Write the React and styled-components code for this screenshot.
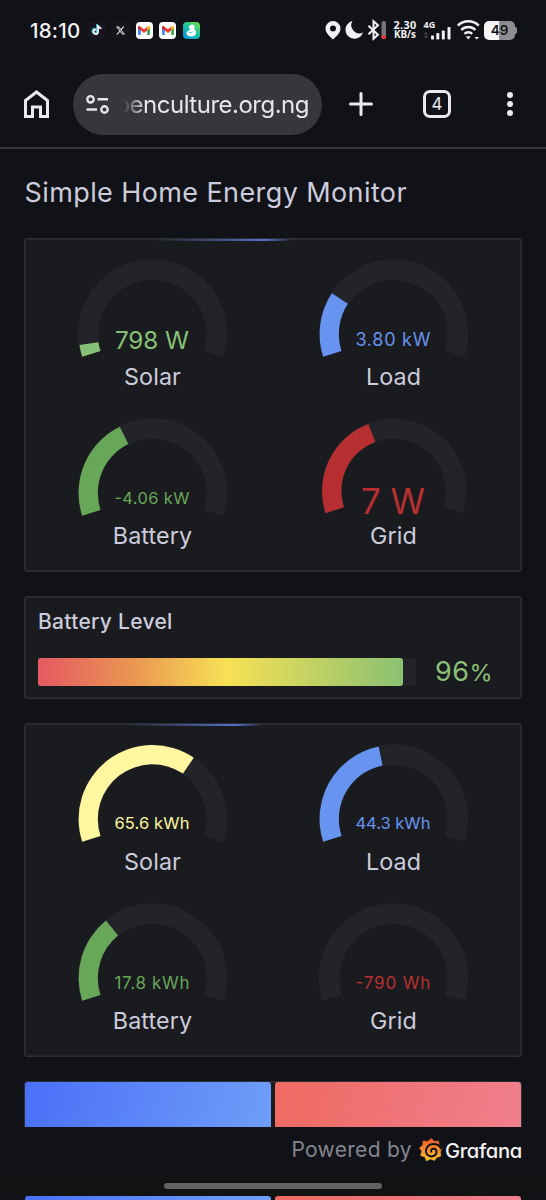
import React from 'react'
import styled, { createGlobalStyle } from 'styled-components'
import { SiTiktok, SiX } from 'react-icons/si'

const GlobalStyle = createGlobalStyle`
  * { box-sizing: border-box; }

  body {
    margin: 0;
    background: #111217;
    color: #ccccdc;
    font-family: Inter, "Liberation Sans", sans-serif;
  }
`

const Screen = styled.div`
  width: 546px;
  height: 1200px;
  overflow: hidden;
  display: flex;
  flex-direction: column;
`

/* ---------- status bar ---------- */

const StatusBar = styled.div`
  height: 60px;
  padding: 0 31px 0 30px;
  display: flex;
  align-items: center;
  color: #f1f1f4;
`

const Clock = styled.div`
  width: 58px;
  font-size: 20.5px;
  font-weight: 500;
  letter-spacing: 0.2px;
`

const AppIcons = styled.div`
  display: flex;
  gap: 6.8px;
  flex: 1;
`

const AppIcon = styled.div`
  width: 17px;
  height: 17px;
  border-radius: 4px;
  background: ${(props) => props.$bg};
  display: flex;
  align-items: center;
  justify-content: center;

  .tiktok { filter: drop-shadow(-0.4px -0.3px 0 #25d3dc) drop-shadow(0.4px 0.3px 0 #d8345f); }
`

const StatusIcons = styled.div`
  display: flex;
  align-items: center;

  svg { display: block; overflow: visible; }
`

const Speed = styled.div`
  width: 24px;
  margin: 0 6px;
  display: flex;
  flex-direction: column;
  align-items: center;
  font-family: "Open Sans", "Noto Sans", sans-serif;
  font-size: 9.8px;
  line-height: 10.5px;
  font-weight: 700;
  white-space: nowrap;

  div:first-child { font-size: 10.8px; letter-spacing: 0.3px; }
`

const Cell = styled.div`
  width: 29px;
  height: 20px;
  margin-right: 5px;
`

const Battery = styled.div`
  width: 31px;
  height: 19px;
  border-radius: 5px;
  background: linear-gradient(90deg, #f4f4f4 48%, #8e8e90 48%);
  color: #111217;
  font-size: 13.5px;
  font-weight: 600;
  line-height: 19px;
  text-align: center;
`

const BatteryTip = styled.div`
  width: 2px;
  height: 7px;
  margin-right: -2px;
  border-radius: 0 2px 2px 0;
  background: #8e8e90;
`

/* ---------- browser toolbar ---------- */

const Toolbar = styled.div`
  height: 89px;
  padding: 1px 30px 0 22px;
  border-bottom: 2px solid #36373b;
  display: flex;
  align-items: center;

  svg { display: block; }
`

const UrlPill = styled.div`
  width: 249px;
  height: 61px;
  margin: 0 26px 0 22px;
  padding: 2px 13px 0 12px;
  border-radius: 31px;
  background: #36363b;
  display: flex;
  align-items: center;
  gap: 13px;
`

const Url = styled.div`
  flex: 1;
  overflow: hidden;
  display: flex;
  justify-content: flex-end;
  color: #e6e6ea;
  font-family: Inter, sans-serif;
  font-size: 24px;
  line-height: 34px;
  letter-spacing: -0.5px;
  white-space: nowrap;
  mask-image: linear-gradient(90deg, transparent 0, #000 22px);
`

const Tabs = styled.div`
  width: 28px;
  height: 28px;
  margin: 0 0 0 49px;
  border: 3px solid #e9e9ee;
  border-radius: 7px;
  color: #e9e9ee;
  font-size: 17px;
  font-weight: 400;
  line-height: 23px;
  text-align: center;
`

const Menu = styled.div`
  margin-left: auto;
  margin-right: 3.5px;
  display: flex;
  flex-direction: column;
  gap: 3px;

  span {
    width: 6px;
    height: 6px;
    border-radius: 50%;
    background: #e9e9ee;
  }
`

/* ---------- dashboard ---------- */

const Dashboard = styled.main`
  height: 978px;
  overflow: hidden;
  padding: 0 24px;
  display: flex;
  flex-direction: column;
  gap: 24px;
`

const Title = styled.h1`
  flex: none;
  height: 65px;
  margin: 0;
  padding: 26px 0 0 0.5px;
  font-size: 27px;
  font-weight: 400;
  line-height: 36px;
  letter-spacing: 0.4px;
`

const Panel = styled.section`
  position: relative;
  flex: none;
  height: ${(props) => props.$height}px;
  padding: ${(props) => props.$padding || 0};
  border: 1px solid #2e2f34;
  border-radius: 3px;
  background: #1a1b1f;
  box-shadow: inset 0 0 0 1px #26272b;
`

const LoadingBar = styled.div`
  position: absolute;
  top: 0;
  left: ${(props) => props.$left}px;
  width: 140px;
  height: 2px;
  background: linear-gradient(90deg, transparent, #5470c8 80%, transparent);
`

const GaugeGrid = styled.div`
  display: grid;
  grid-template-columns: 1fr 1fr;
  grid-auto-rows: 159px;
`

const GaugeItem = styled.div`
  display: flex;
  flex-direction: column;
  align-items: center;

  svg { display: block; flex: none; overflow: visible; }
  text { font-family: Inter, sans-serif; }
`

const GaugeLabel = styled.div`
  font-size: 23.3px;
  line-height: 34px;
  letter-spacing: 0.1px;
`

const PanelTitle = styled.h2`
  margin: 0;
  font-size: 21px;
  font-weight: 500;
  line-height: 26px;
  letter-spacing: 0.3px;
`

const BarRow = styled.div`
  display: flex;
  align-items: center;
  margin-top: 22px;
`

const BarTrack = styled.div`
  width: 378px;
  height: 28px;
  border-radius: 3px;
  background: #232429;
`

const BarFill = styled.div`
  height: 100%;
  border-radius: 3px;
  border: 1px solid #8dc475;
  border-width: 0 1px 0 0;
  background: linear-gradient(90deg, #e55964, #ea9352 25%, #f7e155 52%, #8bc172);
`

const BarValue = styled.div`
  margin-left: 19px;
  padding-top: 2px;
  color: #8cc077;
  font-size: 27px;
  line-height: 26px;
  letter-spacing: 0.5px;

  span { font-size: 23.5px; }
`

const StatRow = styled.div`
  display: flex;
  gap: 4px;
  height: 100%;
`

const Stat = styled.div`
  flex: 1;
  border-radius: 3px 3px 0 0;
  background: ${(props) => props.$bg};
`

const Footer = styled.footer`
  height: 45px;
  flex: none;
  padding: 0 24px;
  display: flex;
  align-items: center;
  justify-content: flex-end;
  color: #85858f;
  font-size: 21px;
  letter-spacing: 0.3px;

  svg { flex: none; margin: 0 2px 0 7px; }
`

const Wordmark = styled.span`
  padding-top: 2px;
  color: #f4f4f6;
  font-size: 20.2px;
  font-weight: 500;
  letter-spacing: -0.3px;
  font-feature-settings: "cv11";
`

const NavBar = styled.div`
  height: 24px;
  flex: none;
  background: #131212;
  display: flex;
  align-items: center;
  justify-content: center;
  padding-top: 4px;

  span {
    width: 218px;
    height: 6px;
    border-radius: 3px;
    background: #626262;
  }
`

const Overflow = styled.div`
  height: 4px;
  flex: none;
  padding: 0 25px;
`

const blueStat = 'linear-gradient(100deg, #4a70f8, #70a0f8)'
const redStat = 'linear-gradient(100deg, #ef6a62, #f0808f)'

// Angles are measured clockwise from the left horizontal
const START = -18
const TOTAL = 216

const point = (radius, angle) => {
  const rad = (angle * Math.PI) / 180
  return `${(-radius * Math.cos(rad)).toFixed(2)} ${(-radius * Math.sin(rad)).toFixed(2)}`
}

const ring = (outer, inner, sweep) => {
  const end = START + sweep
  const large = sweep > 180 ? 1 : 0
  return `M${point(outer, START)}A${outer} ${outer} 0 ${large} 1 ${point(outer, end)}L${point(inner, end)}A${inner} ${inner} 0 ${large} 0 ${point(inner, START)}Z`
}

const Gauge = ({ label, value, sweep, color, size, baseline, width, radius = 74.7 }) => (
  <GaugeItem>
    <svg width="152" height="102" viewBox="-75.5 -76 152 102">
      <g transform={radius < 74 ? 'translate(0.3 -2)' : undefined}>
        <path d={ring(radius, radius - 20.6, TOTAL)} fill="#232429" />
        {sweep > 0 && <path d={ring(radius - 0.8, radius - 20, sweep)} fill={color} />}
      </g>
      <text x={-width / 2 - 0.6} y={baseline} fontSize={size} textLength={width} fill={color}>{value}</text>
    </svg>
    <GaugeLabel>{label}</GaugeLabel>
  </GaugeItem>
)

const power = [
  { label: 'Solar', value: '798 W', sweep: 9.4, color: '#88c077', size: 24.3, baseline: 14.7, width: 74 },
  { label: 'Load', value: '3.80 kW', sweep: 51.5, color: '#6694f0', size: 18, baseline: 12, width: 75 },
  { label: 'Battery', value: '-4.06 kW', sweep: 81.7, color: '#69a758', size: 16.4, baseline: 10.7, width: 75 },
  { label: 'Grid', value: '7 W', sweep: 87.3, color: '#b82f31', size: 35, baseline: 20.5, width: 64, radius: 72.5 },
]

const energy = [
  { label: 'Solar', value: '65.6 kWh', sweep: 141.9, color: '#fff6a0', size: 16.5, baseline: 10.3, width: 75 },
  { label: 'Load', value: '44.3 kWh', sweep: 96.4, color: '#6694f0', size: 16.5, baseline: 10.3, width: 75 },
  { label: 'Battery', value: '17.8 kWh', sweep: 69, color: '#69a758', size: 16.9, baseline: 11, width: 75 },
  { label: 'Grid', value: '-790 Wh', sweep: 0, color: '#b82f31', size: 17, baseline: 11, width: 75 },
]

const GmailIcon = () => (
  <AppIcon $bg="#fff">
    <svg width="12" height="9" viewBox="0 0 24 18">
      <path d="M0 3v13a2 2 0 0 0 2 2h3.500V7z" fill="#4285f4" />
      <path d="M24 3v13a2 2 0 0 1-2 2h-3.500V7z" fill="#34a853" />
      <path d="M18.500 2v7L24 5V2.600C24 0 21.500-.8 19.600.8z" fill="#fbbc04" />
      <path d="M5.500 9V1.700L12 6.500l6.500-4.800V9L12 14z" fill="#ea4335" />
      <path d="M0 2.600V5l5.500 4V2L4.400.8C2.500-.8 0 0 0 2.600z" fill="#c5221f" />
    </svg>
  </AppIcon>
)

const GrafanaIcon = () => (
  <svg width="24" height="24" viewBox="0 0 24 24">
    <linearGradient id="flame" x1="0" y1="0" x2="0" y2="1">
      <stop offset="0" stopColor="#ee5a2b" />
      <stop offset="1" stopColor="#fbc02f" />
    </linearGradient>
    <path
      d="M12.500.5l2.800 3 4.200-.4.700 4.300 2.600 3-1.500 3.600.6 4-4 1.400-2.700 3-3.500-1.500-4.300 1.900-1.500-3.900-4.300-1.400 1.200-4.200L.500 9.800l3.300-2.600.2-4.200 4.600.3z"
      fill="url(#flame)"
      stroke="url(#flame)"
      strokeWidth="0.600"
      strokeLinejoin="round"
    />
    <path
      d="M22 10.500C19.500 4.700 9.500 4.200 7.200 11.200c-1.400 5.200 3.800 8.400 7.700 6.700 3.700-1.700 3.500-6.400.2-7.200-2.200-.4-3.600 1.300-2.800 3"
      fill="none"
      stroke="#111217"
      strokeWidth="1.900"
      strokeLinecap="round"
    />
  </svg>
)

const Status = () => (
  <StatusBar>
    <Clock>18:10</Clock>
    <AppIcons>
      <AppIcon $bg="#17151f"><SiTiktok className="tiktok" size={10} /></AppIcon>
      <AppIcon $bg="#15161a"><SiX size={9} /></AppIcon>
      <GmailIcon />
      <GmailIcon />
      <AppIcon $bg="linear-gradient(35deg, #0a9bd8 10%, #16bfa8 50%, #7be03c)">
        <svg width="11" height="13" viewBox="0 0 11 13" fill="#fff">
          <path d="M5 .8c1.800-1 3.700.2 3.700 2 0 1-.6 1.600-.6 2.300 1.300.8 2.100 2 2.100 3.500 0 2.500-2 3.900-5 3.900-2.900 0-4.700-1.300-4.700-3.200 0-1.500 1.200-2.400 2.900-3l.8-1.600-1.500-.4C2.900 2.900 3.500 1.300 5 .8z" />
          <path d="M3 8.200c1.300 1.100 2.800.8 3.500-.6" fill="none" stroke="#12a5c4" strokeWidth="0.700" />
        </svg>
      </AppIcon>
    </AppIcons>
    <StatusIcons>
      <svg width="62" height="20" viewBox="0 0 62 20" fill="#f1f1f4">
        <path fillRule="evenodd" d="M8 1a7.500 7.500 0 0 0-7.500 7.500C.5 13 4.500 16 8 19.500c3.500-3.500 7.500-6.500 7.500-11A7.500 7.500 0 0 0 8 1zm0 4.500a3 3 0 1 1 0 6 3 3 0 0 1 0-6z" />
        <path d="M27.500 1A9 9 0 1 0 38 12.600 8.200 8.200 0 0 1 27.500 1z" />
        <path d="M43.500 5.800l9.500 9-4.500 4V1.200l4.500 4-9.500 9" fill="none" stroke="#f1f1f4" strokeWidth="2" />
        <rect x="56.500" y="1" width="4.500" height="18" rx="2" fill="#77777a" />
        <path d="M56.500 15.500H61V17a2.200 2.200 0 0 1-4.500 0z" fill="#e2383a" />
      </svg>
      <Speed>
        <div>2.30</div>
        <div>KB/s</div>
      </Speed>
      <Cell>
        <svg width="29" height="20" viewBox="0 0 29 20" fill="#f1f1f4">
          <text x="0.500" y="8" fontSize="9" fontWeight="700" fontFamily="Open Sans">4G</text>
          <path d="M1 14.500l2-2.500 2 2.500zM1 16l2 2.500L5 16z" fill="#4d4d51" />
          <rect x="8" y="15.500" width="3" height="4" rx="0.800" />
          <rect x="13.300" y="13" width="3" height="6.500" rx="0.800" />
          <rect x="18.800" y="10.500" width="3" height="9" rx="0.800" />
          <rect x="24.500" y="7" width="3" height="12.500" rx="0.800" />
        </svg>
      </Cell>
      <svg width="27" height="20" viewBox="0 0 27 20" fill="none" stroke="#f1f1f4" strokeWidth="2.400">
        <path d="M.8 5.600a15 15 0 0 1 21 0M4.200 10a10 10 0 0 1 14.200 0M7.400 13.800a5.500 5.500 0 0 1 7.800 0" />
        <path d="M8.800 16.300h5l-2.500 3.200zM17.500 17h4.500l-2.200 2.500z" fill="#f1f1f4" stroke="none" />
      </svg>
      <Battery>49</Battery>
      <BatteryTip />
    </StatusIcons>
  </StatusBar>
)

const BrowserBar = () => (
  <Toolbar>
    <svg width="29" height="30" viewBox="0 0 29 30" fill="none" stroke="#e9e9ee" strokeWidth="3">
      <path d="M3.500 11.500L14.500 3l11 8.500v16h-7v-9.500h-8v9.500h-7z" />
    </svg>
    <UrlPill>
      <svg width="25" height="22" viewBox="0 0 25 22" fill="none" stroke="#e6e6ea" strokeWidth="2.400">
        <circle cx="5.500" cy="5.300" r="3.200" />
        <circle cx="19.500" cy="15.500" r="3.200" />
        <path d="M12.500 5.300H23M1.500 15.500h10.500" />
      </svg>
      <Url>openculture.org.ng</Url>
    </UrlPill>
    <svg width="26" height="26" viewBox="0 0 26 26" stroke="#e9e9ee" strokeWidth="3" strokeLinecap="round">
      <path d="M13 2.500v21M2.500 13h21" />
    </svg>
    <Tabs>4</Tabs>
    <Menu>
      <span />
      <span />
      <span />
    </Menu>
  </Toolbar>
)

const level = 96.5

const App = () => (
  <>
    <GlobalStyle />
    <Screen>
      <Status />
      <BrowserBar />
      <Dashboard>
        <Title>Simple Home Energy Monitor</Title>
        <Panel $height={334} $padding="19px 7px 0">
          <LoadingBar $left={128} />
          <GaugeGrid>
            {power.map((item) => <Gauge key={item.label} {...item} />)}
          </GaugeGrid>
        </Panel>
        <Panel $height={103} $padding="12px 13px">
          <PanelTitle>Battery Level</PanelTitle>
          <BarRow>
            <BarTrack>
              <BarFill style={{ width: `${level}%` }} />
            </BarTrack>
            <BarValue>96<span>%</span></BarValue>
          </BarRow>
        </Panel>
        <Panel $height={334} $padding="19px 7px 0">
          <LoadingBar $left={98} />
          <GaugeGrid>
            {energy.map((item) => <Gauge key={item.label} {...item} />)}
          </GaugeGrid>
        </Panel>
        <Panel $height={120}>
          <StatRow>
            <Stat $bg={blueStat} />
            <Stat $bg={redStat} />
          </StatRow>
        </Panel>
      </Dashboard>
      <Footer>
        Powered by
        <GrafanaIcon />
        <Wordmark>Grafana</Wordmark>
      </Footer>
      <NavBar><span /></NavBar>
      <Overflow>
        <StatRow>
          <Stat $bg={blueStat} />
          <Stat $bg={redStat} />
        </StatRow>
      </Overflow>
    </Screen>
  </>
)

export default App
